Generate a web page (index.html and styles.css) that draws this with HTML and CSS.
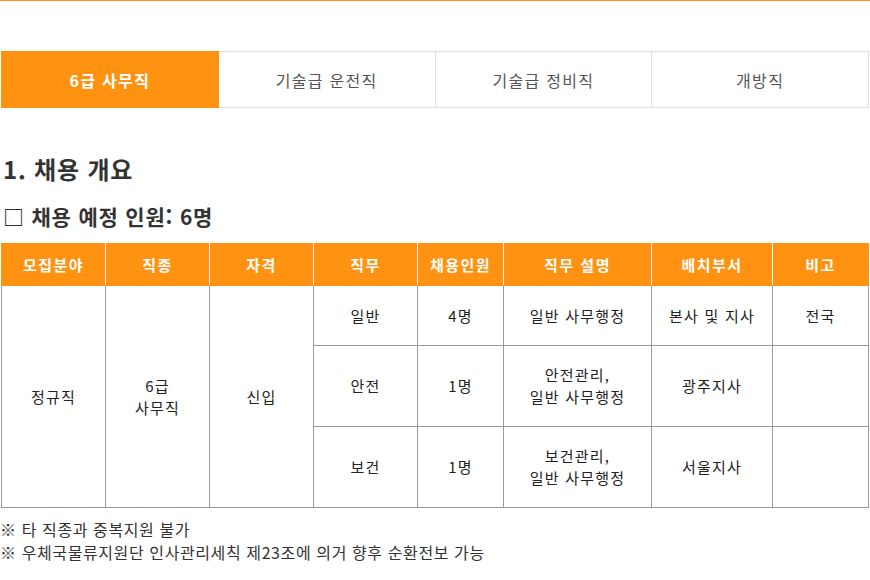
FILE: index.html
```html
<!DOCTYPE html>
<html lang="ko">
<head>
<meta charset="utf-8">
<link rel="stylesheet" href="styles.css">
</head>
<body>
<div class="topline"></div>
<ul class="tabs">
  <li class="tab active">6급 사무직</li>
  <li class="tab">기술급 운전직</li>
  <li class="tab">기술급 정비직</li>
  <li class="tab">개방직</li>
</ul>
<h2 class="h1">1. 채용 개요</h2>
<h3 class="h2">□ 채용 예정 인원: 6명</h3>
<table class="recruit">
  <colgroup>
    <col style="width:104px"><col style="width:104px"><col style="width:104px"><col style="width:104px">
    <col style="width:86px"><col style="width:148px"><col style="width:121px"><col style="width:96px">
  </colgroup>
  <thead>
    <tr>
      <th>모집분야</th><th>직종</th><th>자격</th><th>직무</th><th>채용인원</th><th>직무 설명</th><th>배치부서</th><th>비고</th>
    </tr>
  </thead>
  <tbody>
    <tr class="row-s">
      <td rowspan="3">정규직</td>
      <td rowspan="3">6급<br>사무직</td>
      <td rowspan="3">신입</td>
      <td>일반</td><td>4명</td><td>일반 사무행정</td><td>본사 및 지사</td><td>전국</td>
    </tr>
    <tr class="row-l">
      <td>안전</td><td>1명</td><td>안전관리,<br>일반 사무행정</td><td>광주지사</td><td></td>
    </tr>
    <tr class="row-l">
      <td>보건</td><td>1명</td><td>보건관리,<br>일반 사무행정</td><td>서울지사</td><td></td>
    </tr>
  </tbody>
</table>
<div class="notes">
  <p>※ 타 직종과 중복지원 불가</p>
  <p>※ 우체국물류지원단 인사관리세칙 제23조에 의거 향후 순환전보 가능</p>
</div>
</body>
</html>
```
FILE: styles.css
```css
* { box-sizing: border-box; }
html, body { margin: 0; padding: 0; background: #fff; }
body {
  font-family: "Noto Sans CJK KR", "Noto Sans", sans-serif;
  color: #222;
  width: 870px;
}
.topline { height: 1px; background: #ff9311; }
.tabs {
  list-style: none;
  margin: 50px 0 0 1px;
  padding: 0;
  display: flex;
  width: 868px;
}
.tab {
  flex: 1;
  height: 57px;
  border: 1px solid #e0e0e0;
  border-left: none;
  display: flex;
  align-items: center;
  justify-content: center;
  font-size: 16px;
  letter-spacing: 1.3px;
  color: #555;
}
.tab:first-child { border-left: 1px solid #e0e0e0; }
.tab.active {
  background: #ff9311;
  border-color: #ff9311;
  color: #fff;
  font-weight: bold;
}
.h1 {
  margin: 45px 0 0 3px;
  font-size: 24px;
  line-height: 32px;
  letter-spacing: 0.8px;
  font-weight: bold;
  color: #333;
}
.h2 {
  margin: 16px 0 0 3px;
  font-size: 21px;
  line-height: 30px;
  letter-spacing: 0.8px;
  font-weight: bold;
  color: #333;
}
.recruit {
  margin: 12px 0 0 1px;
  border-collapse: collapse;
  table-layout: fixed;
  width: 867px;
  font-size: 15px;
}
.recruit th {
  background: #ff9311;
  color: #fff;
  font-weight: bold;
  height: 42px;
  padding: 0;
  letter-spacing: 1.5px;
  border-left: 1px solid #fff;
  border-right: 1px solid #fff;
  border-top: 1px solid #ff9311;
  border-bottom: 1px solid #ff9311;
}
.recruit th:first-child { border-left-color: #ff9311; }
.recruit th:last-child { border-right-color: #ff9311; }
.recruit td {
  border: 1px solid #999;
  text-align: center;
  vertical-align: middle;
  padding: 0;
  line-height: 22px;
  letter-spacing: 1.2px;
  color: #222;
}
.row-s { height: 60px; }
.row-l { height: 81px; }
.notes {
  margin-top: 10px;
  font-size: 16px;
  line-height: 23px;
  letter-spacing: 0.6px;
  color: #333;
}
.notes p { margin: 0; }
```
